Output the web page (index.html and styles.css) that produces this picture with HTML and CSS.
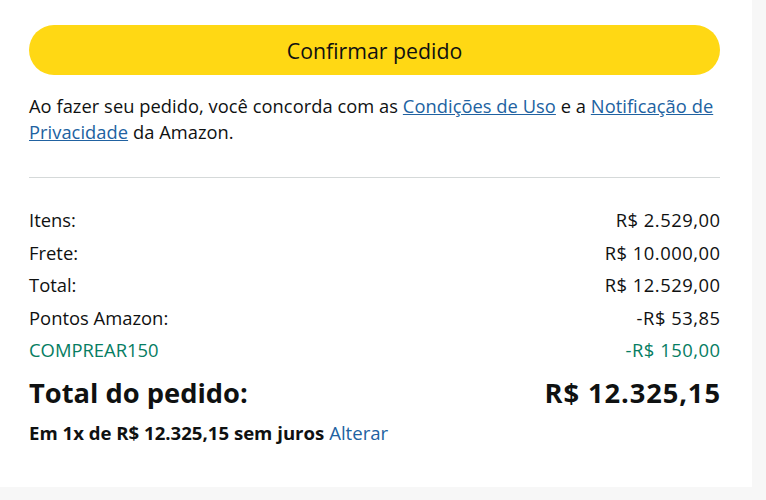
FILE: index.html
```html
<!DOCTYPE html>
<html lang="pt-BR">
<head>
<meta charset="utf-8">
<link rel="stylesheet" href="styles.css">
</head>
<body>
<div class="panel">
  <button class="confirm">Confirmar pedido</button>
  <p class="terms">Ao fazer seu pedido, você concorda com as <a href="#">Condições de Uso</a> e a <a href="#">Notificação de Privacidade</a> da Amazon.</p>
  <hr class="divider">
  <div class="rows">
    <div class="row"><span>Itens:</span><span class="val">R$ 2.529,00</span></div>
    <div class="row"><span>Frete:</span><span class="val">R$ 10.000,00</span></div>
    <div class="row"><span>Total:</span><span class="val">R$ 12.529,00</span></div>
    <div class="row"><span>Pontos Amazon:</span><span class="val">-R$ 53,85</span></div>
    <div class="row promo"><span>COMPREAR150</span><span class="val">-R$ 150,00</span></div>
  </div>
  <div class="grand"><span>Total do pedido:</span><span class="gval">R$ 12.325,15</span></div>
  <div class="installments">Em 1x de R$ 12.325,15 sem juros <a href="#">Alterar</a></div>
</div>
</body>
</html>
```
FILE: styles.css
```css
html, body {
  margin: 0;
  padding: 0;
  background: #f7f7f7;
}
body {
  font-family: "Open Sans", "Noto Sans", sans-serif;
  color: #0f1111;
}
.panel {
  width: 752px;
  height: 487px;
  box-sizing: border-box;
  background: #fff;
  padding: 25px 32px 0 29px;
}
.confirm {
  display: block;
  width: 100%;
  height: 50px;
  border: none;
  border-radius: 25px;
  background: #ffd814;
  font-family: inherit;
  font-size: 21.3px;
  color: #0f1111;
  padding: 0;
}
.terms {
  margin: 18px 0 0;
  font-size: 18.3px;
  line-height: 26px;
  letter-spacing: 0.05px;
}
.terms a, .installments a {
  color: #2162a1;
}
.installments a {
  text-decoration: none;
  font-weight: normal;
}
.divider {
  border: none;
  border-top: 1px solid #d5d9d9;
  margin: 32px 0 26px;
}
.rows {
  display: flex;
  flex-direction: column;
}
.row {
  display: flex;
  justify-content: space-between;
  font-size: 18.4px;
  line-height: 32.5px;
}
.val {
  letter-spacing: 0.5px;
  margin-right: -0.5px;
}
.promo {
  color: #067d62;
}
.grand {
  display: flex;
  justify-content: space-between;
  font-size: 27.3px;
  font-weight: bold;
  line-height: 36px;
  margin-top: 8px;
}
.gval {
  letter-spacing: 0.9px;
  margin-right: -0.9px;
}
.installments {
  margin-top: 10px;
  font-size: 18.6px;
  font-weight: bold;
  line-height: 24px;
}
```
